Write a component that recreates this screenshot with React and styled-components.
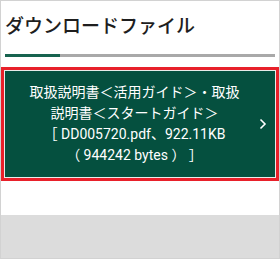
import React from "react";
import styled, { createGlobalStyle } from "styled-components";

const Global = createGlobalStyle`
  html, body { margin: 0; padding: 0; background: #fff; }
  body { font-family: Roboto, "Noto Sans CJK JP", sans-serif; }
`;

const Page = styled.div`
  width: 280px;
  height: 259px;
  box-sizing: border-box;
  border: 1px solid #d2d2d2;
  display: flex;
  flex-direction: column;
  background: #fff;
`;

const Header = styled.div`
  padding: 12px 4px 0 4px;
`;

const Title = styled.h2`
  margin: 0;
  font-size: 19px;
  line-height: 28px;
  font-weight: 500;
  color: #1e1e1e;
  font-family: Roboto, "Noto Sans CJK JP", sans-serif;
`;

const Rule = styled.div`
  margin-top: 13px;
  height: 3px;
  display: flex;
  background: #a9a9a9;
`;

const RuleActive = styled.div`
  width: 55px;
  background: #17634f;
`;

const Focus = styled.div`
  margin-top: 10px;
  border: 3px solid #e8202a;
  padding: 1px;
  background: #e9ecea;
`;

const Button = styled.a`
  display: flex;
  align-items: center;
  min-height: 106px;
  box-sizing: border-box;
  padding: 11px 8px 11px 21px;
  background: #05503f;
  color: #fff;
  text-decoration: none;
`;

const Label = styled.span`
  flex: 1;
  text-align: center;
  font-size: 14px;
  line-height: 21px;
`;

const FileInfo = styled.span`
  display: block;
`;

const NoWrap = styled.span`
  white-space: nowrap;
`;

const Chevron = styled.svg`
  flex: none;
  margin-left: 16px;
  width: 8px;
  height: 12px;
`;

const Spacer = styled.div`
  height: 34px;
`;

const Footer = styled.div`
  flex: 1;
  background: #dcdcdc;
`;

export default function App() {
  return (
    <>
      <Global />
      <Page>
        <Header>
          <Title>ダウンロードファイル</Title>
          <Rule>
            <RuleActive />
          </Rule>
        </Header>
        <Focus>
          <Button href="#">
            <Label>
              取扱説明書＜活用ガイド＞・取扱説明書＜スタートガイド＞
              <FileInfo>
                ［ DD005720.pdf、922.11KB <NoWrap>（ 944242 bytes ） ］</NoWrap>
              </FileInfo>
            </Label>
            <Chevron viewBox="0 0 8 12">
              <polyline points="1.5,1.5 6,6 1.5,10.5" fill="none" stroke="#fff" strokeWidth="1.6" />
            </Chevron>
          </Button>
        </Focus>
        <Spacer />
        <Footer />
      </Page>
    </>
  );
}
